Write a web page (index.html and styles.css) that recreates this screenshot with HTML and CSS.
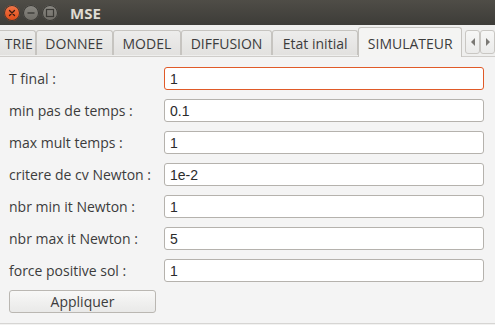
FILE: index.html
```html
<!DOCTYPE html>
<html>
<head>
<meta charset="utf-8">
<link rel="stylesheet" href="styles.css">
</head>
<body>
<div class="window">
  <div class="titlebar">
    <div class="controls">
      <span class="wbtn close"><svg width="14" height="14" viewBox="0 0 14 14"><path d="M4.5 4.5 L9.5 9.5 M9.5 4.5 L4.5 9.5" stroke="#3a1a10" stroke-width="1.3" stroke-linecap="round"/></svg></span>
      <span class="wbtn"><svg width="14" height="14" viewBox="0 0 14 14"><path d="M3.5 7 H10.5" stroke="#3c3b37" stroke-width="1.4"/></svg></span>
      <span class="wbtn"><svg width="14" height="14" viewBox="0 0 14 14"><rect x="3.5" y="3.5" width="7" height="7" fill="none" stroke="#3c3b37" stroke-width="1.2"/></svg></span>
    </div>
    <div class="title">MSE</div>
  </div>
  <div class="tabbar">
    <div class="tab t1"><span class="clip">TRIE</span></div>
    <div class="tab t2">DONNEE</div>
    <div class="tab t3">MODEL</div>
    <div class="tab t4">DIFFUSION</div>
    <div class="tab t5">Etat initial</div>
    <div class="tab active">SIMULATEUR</div>
    <div class="arrows">
      <div class="arrow"><svg width="8" height="10" viewBox="0 0 8 10"><path d="M6 1 L2 5 L6 9 Z" fill="#7a7874"/></svg></div>
      <div class="arrow"><svg width="8" height="10" viewBox="0 0 8 10"><path d="M2 1 L6 5 L2 9 Z" fill="#7a7874"/></svg></div>
    </div>
  </div>
  <div class="content">
    <div class="form">
      <label>T final :</label><div class="input focus">1</div>
      <label>min pas de temps :</label><div class="input">0.1</div>
      <label>max mult temps :</label><div class="input">1</div>
      <label>critere de cv Newton :</label><div class="input">1e-2</div>
      <label>nbr min it Newton :</label><div class="input">1</div>
      <label>nbr max it Newton :</label><div class="input">5</div>
      <label>force positive sol :</label><div class="input">1</div>
    </div>
    <div class="btnrow"><button class="apply">Appliquer</button></div>
  </div>
</div>
</body>
</html>
```
FILE: styles.css
```css
html, body {
  margin: 0;
  padding: 0;
  background: #f2f2f1;
}
.window {
  width: 495px;
  height: 325px;
  display: flex;
  flex-direction: column;
  font-family: "Open Sans", "DejaVu Sans", sans-serif;
  color: #3c3c3c;
  overflow: hidden;
}
.titlebar {
  height: 25px;
  flex: none;
  background: linear-gradient(#4f4d47, #3d3c38);
  display: flex;
  align-items: center;
  padding-left: 4px;
}
.controls {
  display: flex;
  gap: 3px;
}
.wbtn {
  width: 16px;
  height: 16px;
  border-radius: 50%;
  background: linear-gradient(#8a8882, #6e6c66);
  display: flex;
  align-items: center;
  justify-content: center;
  box-shadow: inset 0 0 0 1px #3a3935;
}
.wbtn.close {
  background: linear-gradient(#f2774a, #df4b16);
}
.title {
  margin-left: 12px;
  color: #dfdbd2;
  font-weight: bold;
  font-size: 15px;
}
.tabbar {
  height: 31px;
  flex: none;
  display: flex;
  align-items: flex-end;
  border-bottom: 1px solid #cfcdca;
  background: #efefee;
}
.tab {
  height: 25px;
  box-sizing: border-box;
  border: 1px solid #c6c4c0;
  border-bottom: none;
  border-radius: 3px 3px 0 0;
  background: linear-gradient(#ededec, #e2e1df);
  font-size: 14px;
  display: flex;
  align-items: center;
  justify-content: center;
  color: #3c3c3c;
  margin-bottom: 1px;
  overflow: hidden;
  white-space: nowrap;
}
.t1 { width: 36px; justify-content: flex-end; padding-right: 2px; border-left: none; border-radius: 0 3px 0 0; }
.t2 { width: 77px; }
.t3 { width: 69px; }
.t4 { width: 91px; }
.t5 { width: 87px; }
.tab.active {
  width: 104px;
  height: 30px;
  background: #f4f4f3;
  margin-bottom: -1px;
  border-color: #c6c4c0;
  padding-top: 2px;
}
.arrows {
  display: flex;
  margin-left: 3px;
  margin-bottom: 2px;
}
.arrow {
  width: 15px;
  height: 24px;
  box-sizing: border-box;
  border: 1px solid #c9c7c3;
  border-radius: 3px;
  background: linear-gradient(#f7f7f6, #ebebea);
  display: flex;
  align-items: center;
  justify-content: center;
}
.content {
  flex: 1;
  background: #f4f4f4;
  padding: 10px 11px 0 9px;
  border-bottom: 1px solid #d6d5d3;
  margin-bottom: 1px;
}
.form {
  display: grid;
  grid-template-columns: 155px 320px;
  row-gap: 9px;
  align-items: center;
}
.form label {
  font-size: 14px;
  color: #3c3c3c;
}
.input {
  height: 23px;
  box-sizing: border-box;
  border: 1px solid #b5b2ad;
  border-radius: 3px;
  background: #fff;
  font-family: "Liberation Sans", Arial, sans-serif;
  font-size: 14px;
  color: #2b2b2b;
  padding-left: 5px;
  display: flex;
  align-items: center;
}
.input.focus {
  border-color: #e05a28;
}
.btnrow {
  margin-top: 8px;
}
.apply {
  width: 147px;
  height: 23px;
  border: 1px solid #bab7b2;
  border-radius: 3px;
  background: linear-gradient(#f8f8f7, #e9e9e8);
  font-family: "Open Sans", "DejaVu Sans", sans-serif;
  font-size: 14px;
  color: #3c3c3c;
  padding: 0;
}
```
